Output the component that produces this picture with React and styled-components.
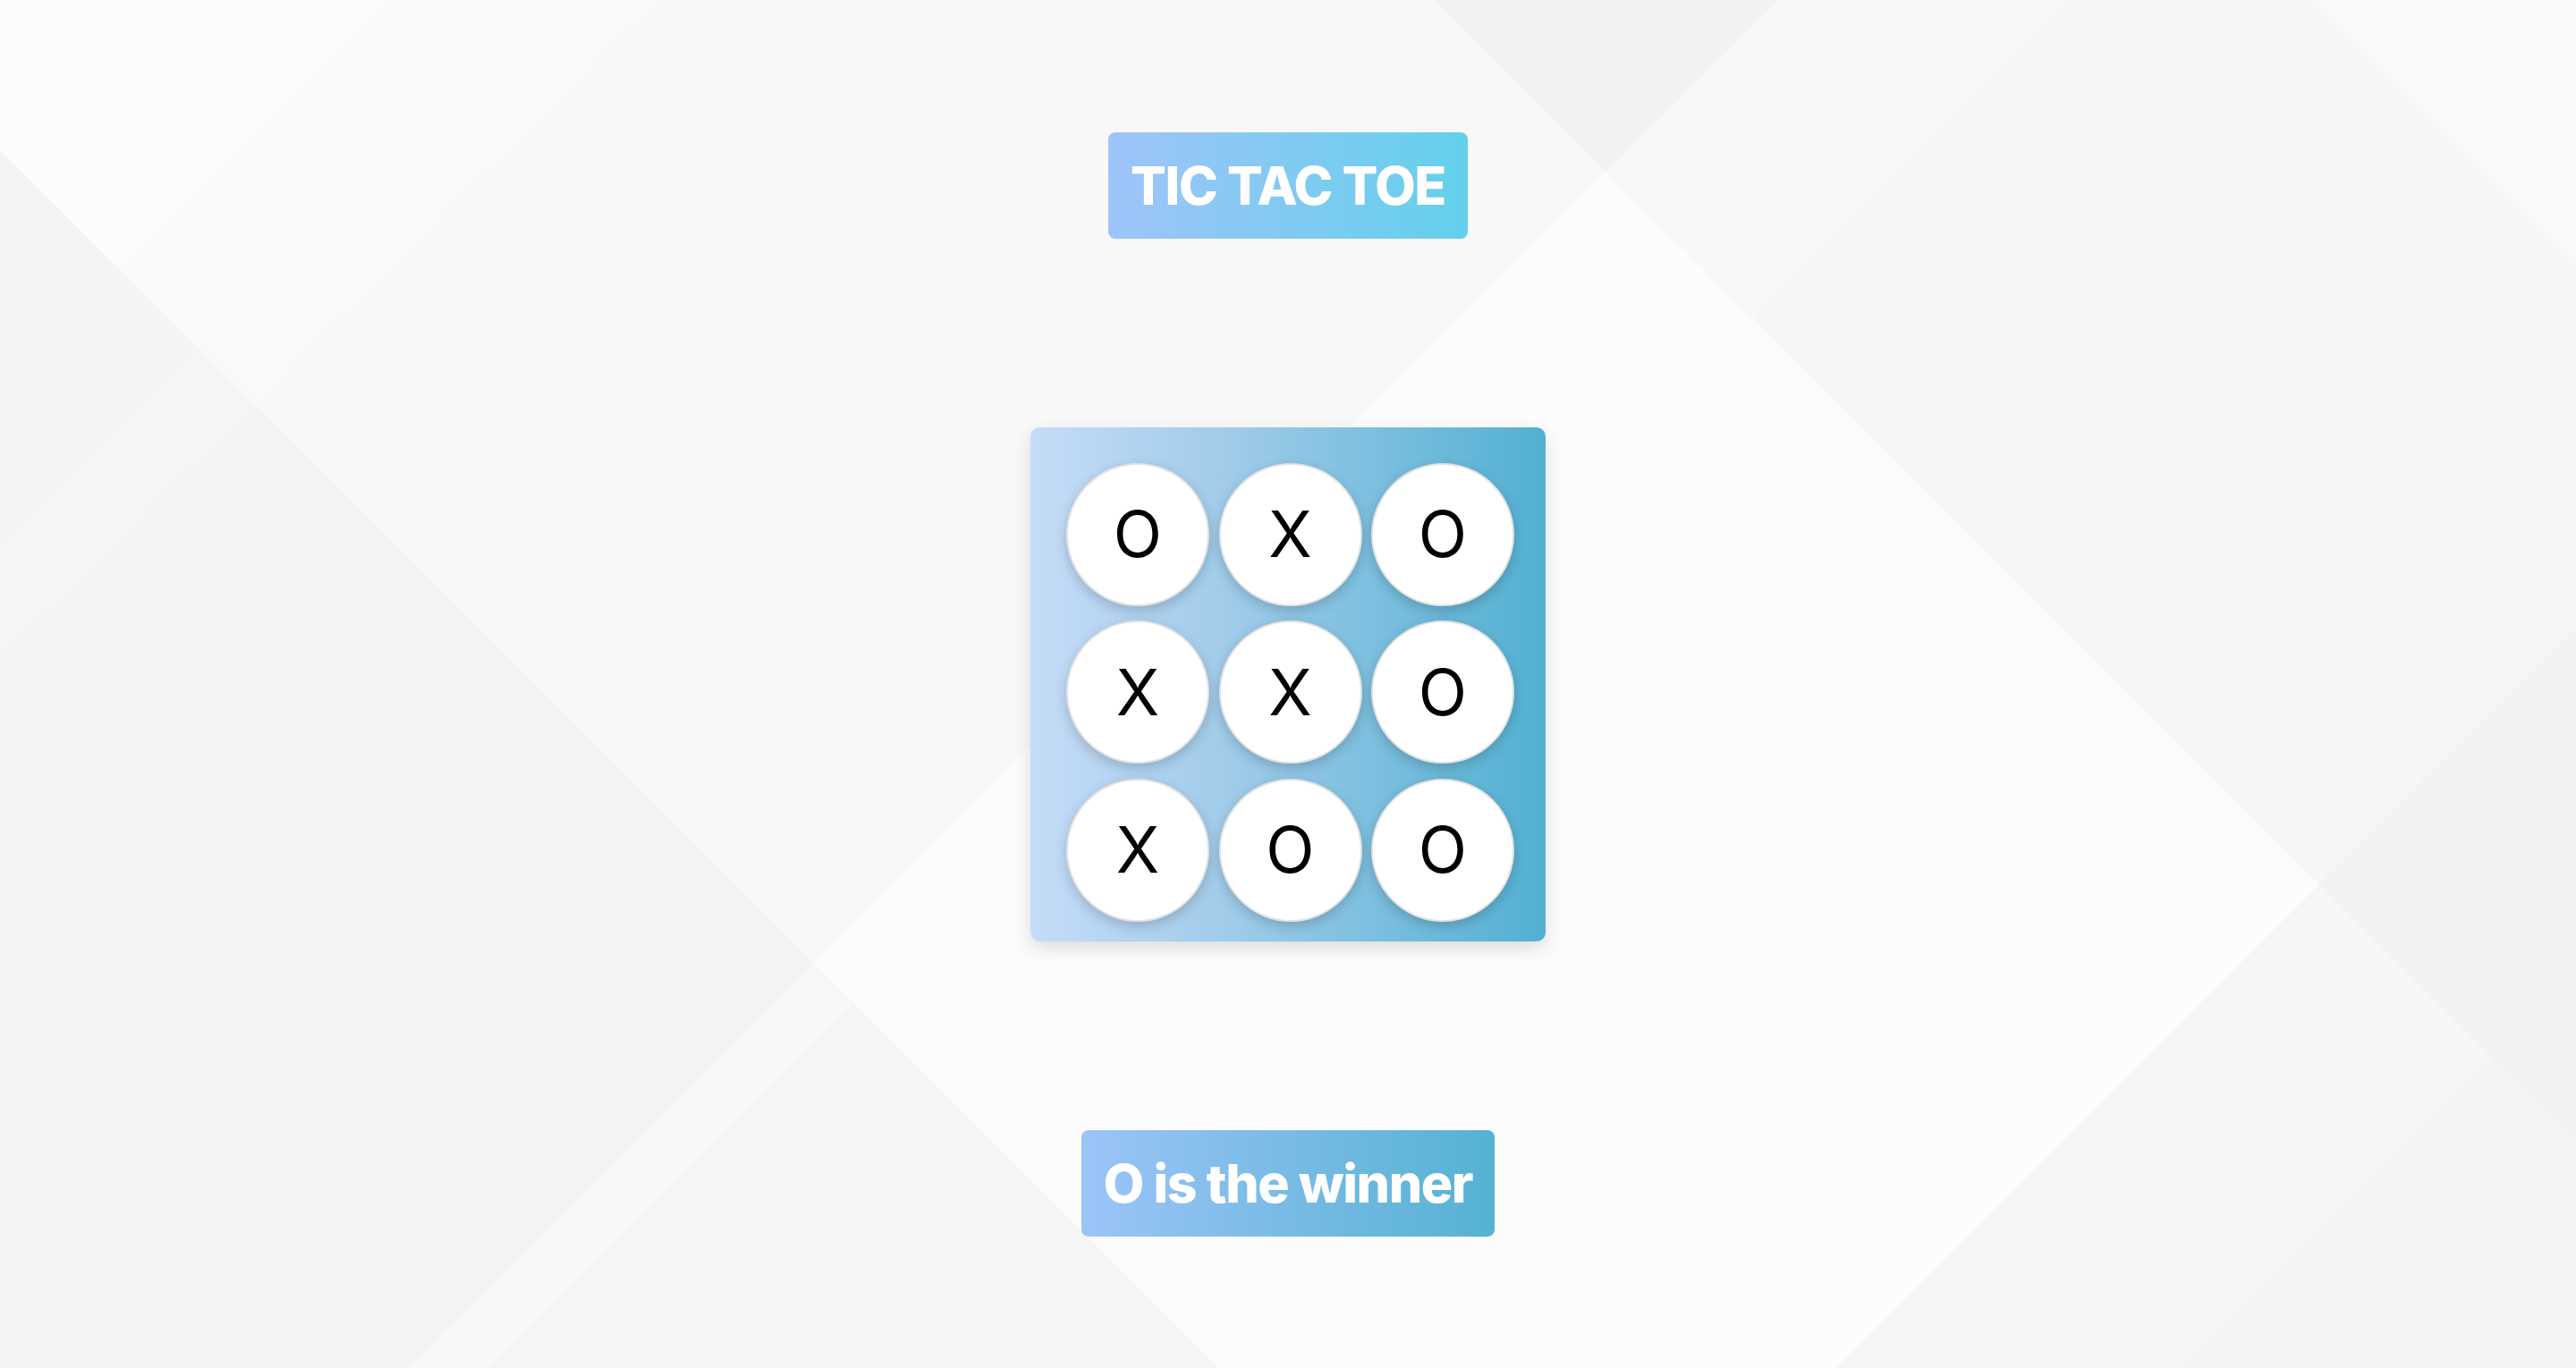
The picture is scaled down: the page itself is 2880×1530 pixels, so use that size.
import React from "react";
import styled, { createGlobalStyle } from "styled-components";

const GlobalStyle = createGlobalStyle`
  html, body {
    margin: 0;
    padding: 0;
    background: #f8f8f8;
  }
  body {
    font-family: Inter, "Noto Sans", sans-serif;
  }
  * { box-sizing: border-box; }
`;

const Page = styled.main`
  position: relative;
  min-height: 100vh;
  display: flex;
  flex-direction: column;
  align-items: center;
  justify-content: center;
  gap: 211px;
  overflow: hidden;
`;

const Backdrop = styled.svg`
  position: fixed;
  inset: 0;
  width: 100%;
  height: 100%;
  z-index: 0;
  pointer-events: none;
`;

const Banner = styled.h1`
  position: relative;
  z-index: 1;
  margin: 0;
  padding: 24px 25px;
  border-radius: 8px;
  background: linear-gradient(90deg, ${(p) => p.$from}, ${(p) => p.$to});
  color: #ffffff;
  font-family: Inter, "Noto Sans", sans-serif;
  font-weight: 800;
  font-size: 59px;
  line-height: 71px;
  letter-spacing: -1.4px;
  white-space: nowrap;
`;

const Board = styled.div`
  position: relative;
  z-index: 1;
  display: grid;
  grid-template-columns: repeat(3, 160px);
  grid-auto-rows: 160px;
  column-gap: 10.5px;
  row-gap: 16.5px;
  padding: 40px 35px 22px 40px;
  border-radius: 10px;
  background: linear-gradient(90deg, #c6dcf8 0%, #9ecbe9 40%, #52b0d2 100%);
  box-shadow: 0 8px 20px rgba(0, 0, 0, 0.12);
`;

const Cell = styled.button`
  width: 160px;
  height: 160px;
  padding: 0;
  border-radius: 50%;
  border: 2px solid #e3e3e3;
  background: #ffffff;
  box-shadow: 0 5px 14px rgba(0, 0, 0, 0.18);
  display: flex;
  align-items: center;
  justify-content: center;
  font-family: Inter, "Noto Sans", sans-serif;
  font-weight: 400;
  font-size: 71px;
  line-height: 1;
  color: #000000;
  cursor: pointer;
`;

const board = ["O", "X", "O", "X", "X", "O", "X", "O", "O"];

function Background() {
  return (
    <Backdrop viewBox="0 0 2880 1530" preserveAspectRatio="none">
      <rect x="0" y="0" width="2880" height="1530" fill="#f8f8f8" />
      <polygon points="0,0 430,0 0,430" fill="#fcfcfc" />
      <polygon points="430,0 605,0 0,605 0,430" fill="#fafafa" />
      <polygon points="909.5,1077.5 1795.5,191.5 2880,1276 2880,1530 1362,1530" fill="#fcfcfc" />
      <polygon points="1604,0 2880,0 2880,1276" fill="#f6f6f6" />
      <polygon points="1604,0 1987,0 1795.5,191.5" fill="#f1f1f1" />
      <polygon points="1987,0 2316,0 1960,356 1795.5,191.5" fill="#f8f8f8" />
      <polygon points="2579,0 2880,0 2880,301" fill="#f9f9f9" />
      <polygon points="2593,989 2880,702 2880,1276" fill="#f2f2f2" />
      <polygon points="2593,989 2880,1276 2880,1530 2053,1530" fill="#f6f6f6" />
      <polygon points="2787,1183 2880,1276 2880,1530 2440,1530" fill="#f4f4f4" />
      <polygon points="0,168 1362,1530 0,1530" fill="#f3f3f3" />
      <polygon points="909.5,1077.5 954,1122 546,1530 457,1530" fill="#f8f8f8" />
      <polygon points="954,1122 1362,1530 546,1530" fill="#f5f5f5" />
      <polygon points="605,0 742,0 0,742 0,605" fill="#ffffff" fillOpacity="0.22" />
    </Backdrop>
  );
}

export default function App() {
  return (
    <>
      <GlobalStyle />
      <Page>
        <Background />
        <Banner $from="#9fc4f9" $to="#64d0eb">TIC TAC TOE</Banner>
        <Board>
          {board.map((v, i) => (
            <Cell key={i}>{v}</Cell>
          ))}
        </Board>
        <Banner as="h2" $from="#9cc4f8" $to="#55b2d3">O is the winner</Banner>
      </Page>
    </>
  );
}
